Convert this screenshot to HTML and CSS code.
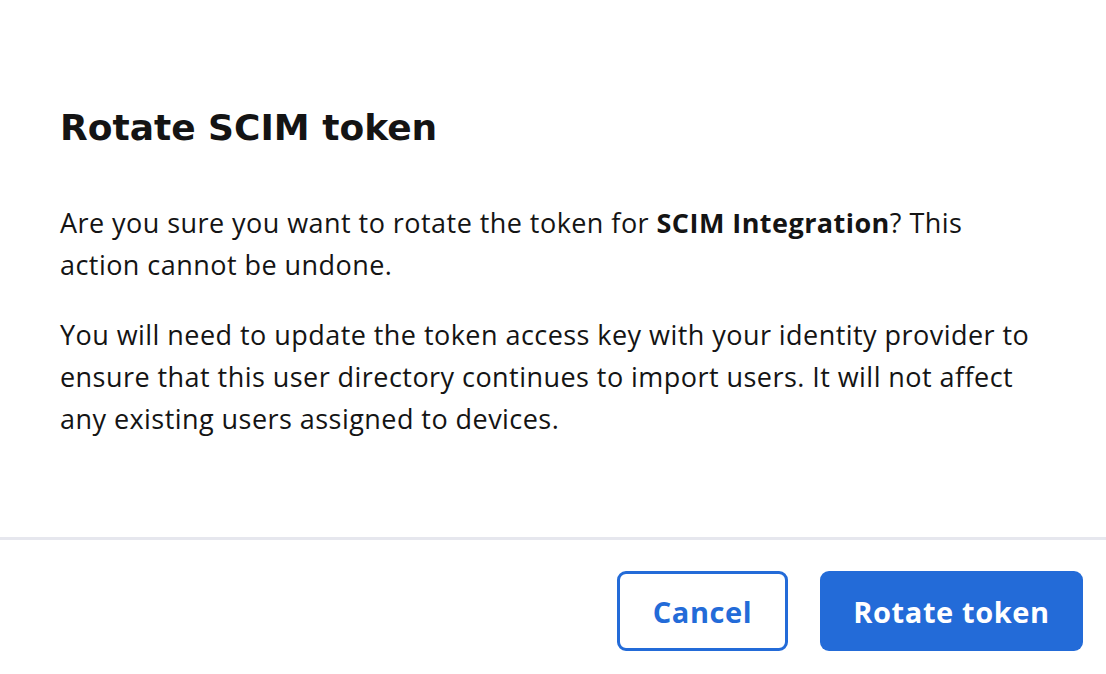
FILE: index.html
```html
<!DOCTYPE html>
<html>
<head>
<meta charset="utf-8">
<link rel="stylesheet" href="styles.css">
</head>
<body>
<div class="dialog">
  <div class="content">
    <h1 class="title">Rotate SCIM token</h1>
    <p class="text">Are you sure you want to rotate the token for <strong>SCIM Integration</strong>? This action cannot be undone.</p>
    <p class="text">You will need to update the token access key with your identity provider to ensure that this user directory continues to import users. It will not affect any existing users assigned to devices.</p>
  </div>
  <div class="footer">
    <button class="btn btn-secondary">Cancel</button>
    <button class="btn btn-primary">Rotate token</button>
  </div>
</div>
</body>
</html>
```

FILE: styles.css
```css
html, body {
  margin: 0;
  padding: 0;
  background: #ffffff;
}
body {
  font-family: "Open Sans", "Liberation Sans", sans-serif;
  color: #141414;
}
.dialog {
  width: 1106px;
  height: 674px;
  display: flex;
  flex-direction: column;
}
.content {
  padding: 106px 60px 0 60px;
  height: 537px;
  box-sizing: border-box;
}
.title {
  margin: 0 0 52px 0;
  font-family: "DejaVu Sans", "Open Sans", sans-serif;
  font-size: 36px;
  line-height: 44px;
  font-weight: 700;
  letter-spacing: 0;
}
.text {
  margin: 0 0 28px 0;
  font-size: 27px;
  line-height: 42px;
  letter-spacing: 0.45px;
  max-width: 986px;
}
.text strong {
  font-weight: 700;
}
.footer {
  border-top: 3px solid #e6e7ee;
  display: flex;
  justify-content: flex-end;
  gap: 32px;
  padding: 31px 23px 0 0;
}
.btn {
  height: 80px;
  border-radius: 9px;
  font-family: "Open Sans", "Liberation Sans", sans-serif;
  font-size: 29px;
  font-weight: 700;
  letter-spacing: 0.6px;
  cursor: pointer;
  box-sizing: border-box;
}
.btn-secondary {
  width: 171px;
  background: #ffffff;
  color: #236bd8;
  border: 3px solid #236bd8;
}
.btn-primary {
  width: 263px;
  background: #236bd8;
  color: #ffffff;
  border: none;
}
```
